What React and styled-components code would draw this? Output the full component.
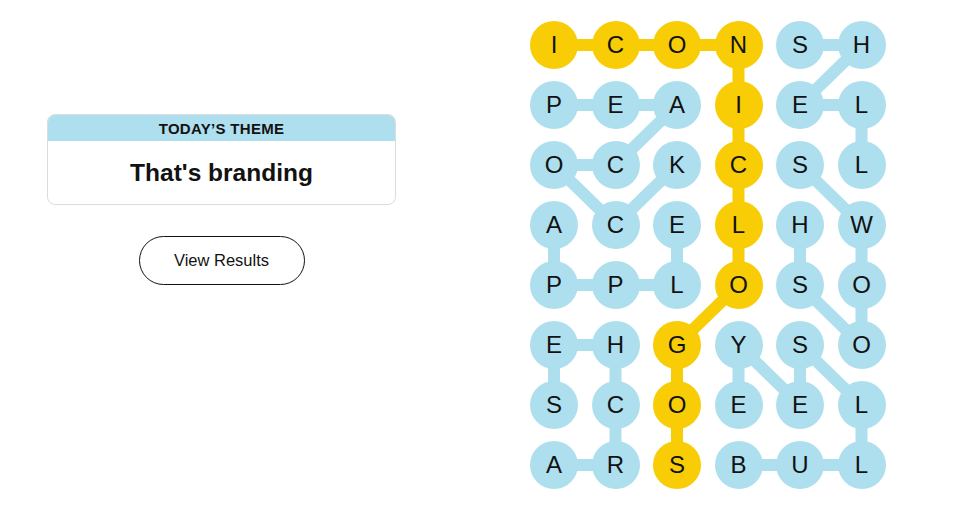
import React from 'react';
import styled, { createGlobalStyle } from 'styled-components';

const GRID = [
  'ICONSH',
  'PEAIEL',
  'OCKCSL',
  'ACELHW',
  'PPLOSO',
  'EHGYSO',
  'SCOEEL',
  'ARSBUL',
];

// found words as [row, col] paths
const WORDS = [
  { spangram: true, path: [[0, 0], [0, 1], [0, 2], [0, 3], [1, 3], [2, 3], [3, 3], [4, 3], [5, 2], [6, 2], [7, 2]] },
  { path: [[1, 0], [1, 1], [1, 2], [2, 1], [2, 0], [3, 1], [2, 2]] },
  { path: [[3, 0], [4, 0], [4, 1], [4, 2], [3, 2]] },
  { path: [[7, 0], [7, 1], [6, 1], [5, 1], [5, 0], [6, 0]] },
  { path: [[0, 4], [0, 5], [1, 4], [1, 5], [2, 5]] },
  { path: [[2, 4], [3, 5], [4, 5], [5, 5], [4, 4], [3, 4]] },
  { path: [[7, 3], [7, 4], [7, 5], [6, 5], [5, 4], [6, 4], [5, 3], [6, 3]] },
];

const CELL = 48;
const COL_STEP = 61.5;
const ROW_STEP = 60;
const BLUE = '#aedfee';
const YELLOW = '#f8cd05';

const spangramCells = new Set(
  WORDS.filter((w) => w.spangram).flatMap((w) => w.path.map(([r, c]) => `${r}-${c}`))
);

function Connectors() {
  const cx = (c) => CELL / 2 + c * COL_STEP;
  const cy = (r) => CELL / 2 + r * ROW_STEP;
  return (
    <Lines width="356" height="468" viewBox="0 0 356 468">
      {WORDS.map((w, i) => (
        <polyline
          key={i}
          points={w.path.map(([r, c]) => `${cx(c)},${cy(r)}`).join(' ')}
          fill="none"
          stroke={w.spangram ? YELLOW : BLUE}
          strokeWidth="12"
          strokeLinejoin="round"
        />
      ))}
    </Lines>
  );
}

function App() {
  return (
    <Page>
      <GlobalStyle />
      <LeftColumn>
        <ThemeCard>
          <ThemeHeader>Today’s Theme</ThemeHeader>
          <ThemeTitle>That's branding</ThemeTitle>
        </ThemeCard>
        <ResultsButton>View Results</ResultsButton>
      </LeftColumn>
      <Board>
        <Connectors />
        {GRID.map((row, r) =>
          row.split('').map((letter, c) => (
            <Letter key={`${r}-${c}`} spangram={spangramCells.has(`${r}-${c}`)}>
              {letter}
            </Letter>
          ))
        )}
      </Board>
    </Page>
  );
}

export default App;

const GlobalStyle = createGlobalStyle`
  body {
    margin: 0;
    background: #fff;
    font-family: 'Liberation Sans', Arial, sans-serif;
    color: #121212;
  }
`;

const Page = styled.div`
  display: flex;
  align-items: flex-start;
  padding: 21px 0 0 47px;
  width: 958px;
  height: 532px;
  box-sizing: border-box;
`;

const LeftColumn = styled.div`
  display: flex;
  flex-direction: column;
  align-items: center;
  width: 349px;
  margin-top: 93px;
  gap: 31px;
`;

const ThemeCard = styled.div`
  width: 100%;
  border: 1px solid #dcdcdc;
  border-radius: 8px;
  overflow: hidden;
  box-sizing: border-box;
  height: 91px;
`;

const ThemeHeader = styled.div`
  background: ${BLUE};
  height: 26px;
  display: flex;
  align-items: center;
  justify-content: center;
  font-family: 'Liberation Sans', Arial, sans-serif;
  font-weight: 700;
  font-size: 15px;
  letter-spacing: 0.3px;
  text-transform: uppercase;
  color: #121212;
`;

const ThemeTitle = styled.div`
  height: 63px;
  display: flex;
  align-items: center;
  justify-content: center;
  font-family: 'Liberation Sans', Arial, sans-serif;
  font-weight: 700;
  font-size: 24.5px;
  color: #121212;
`;

const ResultsButton = styled.button`
  width: 166px;
  height: 49px;
  border: 1px solid #121212;
  border-radius: 25px;
  background: #fff;
  font-family: 'Liberation Sans', Arial, sans-serif;
  font-size: 16.5px;
  color: #121212;
  cursor: pointer;
`;

const Board = styled.div`
  position: relative;
  margin-left: 134px;
  display: grid;
  grid-template-columns: repeat(6, ${CELL}px);
  grid-auto-rows: ${CELL}px;
  column-gap: ${COL_STEP - CELL}px;
  row-gap: ${ROW_STEP - CELL}px;
`;

const Lines = styled.svg`
  position: absolute;
  left: 0;
  top: 0;
  z-index: 0;
`;

const Letter = styled.div`
  position: relative;
  z-index: 1;
  width: ${CELL}px;
  height: ${CELL}px;
  border-radius: 50%;
  background: ${(props) => (props.spangram ? YELLOW : BLUE)};
  display: flex;
  align-items: center;
  justify-content: center;
  font-family: 'Liberation Sans', Arial, sans-serif;
  font-size: 24px;
  color: #121212;
`;
